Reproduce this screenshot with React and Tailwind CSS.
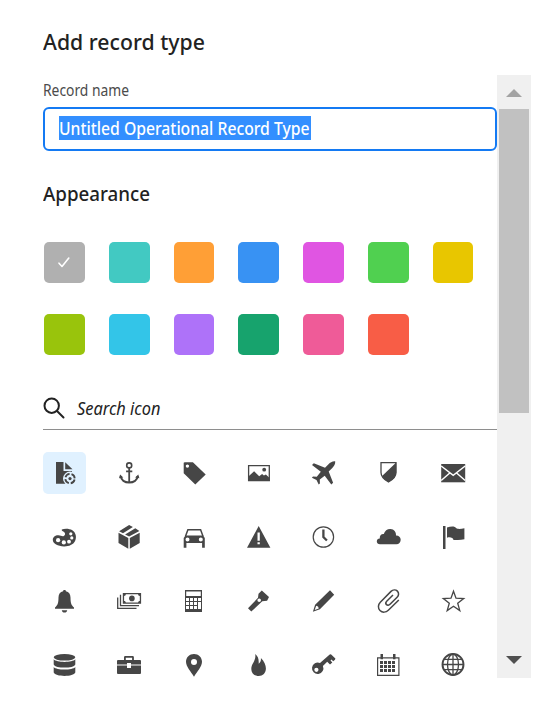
import React from "react";

const swatches = [
  "bg-[#b0b0b0]", "bg-[#42c9c2]", "bg-[#ff9f36]", "bg-[#3892f3]", "bg-[#e055e2]", "bg-[#50d050]", "bg-[#e8c600]",
  "bg-[#99c40c]", "bg-[#33c5e8]", "bg-[#ae72f9]", "bg-[#17a36d]", "bg-[#ef5b98]", "bg-[#f85d46]",
];

const line = { fill: "none", stroke: "currentColor" };

const icons = [
  <g>
    <path d="M3.500 1h7.500v9H19.500V22.800H3.500z" />
    <path d="M12.700 1.200v7h7.300z" />
    <circle cx="17.500" cy="17.600" r="7" fill="#e0f1ff" />
    <circle cx="17.500" cy="17.600" r="4.700" {...line} strokeWidth="1.800" strokeDasharray="5.400 1.980" strokeDashoffset="-1" />
    <circle cx="17.500" cy="17.600" r="1.600" />
  </g>,
  <g>
    <circle cx="11.700" cy="4.400" r="2.500" {...line} strokeWidth="1.600" />
    <path d="M11.700 7v15M8.600 10.400h6.200" {...line} strokeWidth="1.800" />
    <path d="M3.200 15.200c.4 4 4 6.300 8.500 6.300s8.100-2.300 8.500-6.300" {...line} strokeWidth="2" />
    <path d="M1.500 17.200 2.600 13.500 5.800 16.600zM21.900 17.200 20.800 13.500 17.600 16.600z" />
  </g>,
  <path fillRule="evenodd" d="M2.200 1.200h8.200L23.200 13.400 12.800 23.600 1.200 12.200V1.800zM4.900 3.400a1.700 1.700 0 1 0 0 3.400 1.700 1.700 0 0 0 0-3.400z" />,
  <g>
    <path d="M2.100 4.700h20.700v14.800H2.100z" {...line} strokeWidth="1.300" />
    <path d="M1.900 15.500 7.600 10.200 12.700 15.200 15.600 13 17.400 14.500 19.400 13.600 23.100 17v3H1.900z" />
    <circle cx="17.700" cy="8.700" r="1.900" />
  </g>,
  <path d="M23.700.3C21 0 18.700 1.500 17 3.200L13.500 6.800 2.300 2.200.5 4l8.800 6.800-4 5-3.800-.2L.4 16.800 5 19l2.200 4.600 1.200-1.200-.1-3.800 4.900-3.900 6.600 8.900 1.800-1.800-4.400-11.300L20.800 7c1.700-1.700 3.200-4 2.900-6.700z" />,
  <g>
    <path d="M4.500 1.700h15v9.800c0 4.500-3.500 7.300-7.500 9.500-4-2.200-7.500-5-7.500-9.500z" {...line} strokeWidth="1.300" />
    <path d="M19.700 1.500v10c0 4.500-3.700 7.400-7.700 9.600-3-1.600-5.300-3.600-6.400-6.100z" />
  </g>,
  <g>
    <path d="M-.3 3h24v18.300h-24z" />
    <path d="M-.3 5 11.700 14.300 23.700 5M-.3 19.500l8.600-7.500M23.700 19.500l-8.600-7.500" fill="none" stroke="#fff" strokeWidth="1.500" />
  </g>,

  <g>
    <path d="M9.300 4.600C12 3.300 17 3.500 19.800 5.300c3.600 2.300 4.600 7 2.800 10.700-1.900 3.800-6.300 5.500-11.100 5.400C5.400 21.300.3 18.800.3 14.800.3 11.800 3 10 6 10.200c2.300.1 3.600 1.500 5.300.8 1.900-.8 1.500-3 .3-3.900C10.600 6.400 8.800 6 9.300 4.600z" />
    <g fill="#fff">
      <circle cx="5.600" cy="15.200" r="2.100" /><circle cx="11.300" cy="17.400" r="2.100" /><circle cx="16.500" cy="16.700" r="1.900" /><circle cx="19.300" cy="12.900" r="1.600" /><circle cx="18.300" cy="8.800" r="1.600" />
    </g>
  </g>,
  <g>
    <path d="M1 7.800 10.800 13v10.700L1 18zM12.300 13l9.900-5.200V18l-9.900 5.700z" />
    <path d="M1.600 6.200 11.600 0l3.800 2.100L5.500 8.300zM7.600 9.400l10.200-6.100 4.100 2.600-10.300 5.600z" />
  </g>,
  <g>
    <path d="M2.900 11.500 5.400 4.800h12.700l2.500 6.700" {...line} strokeWidth="1.500" />
    <path fillRule="evenodd" d="M3 10.500h17.500l1.800 2.500v9.700h-2.700V18H3.900v4.700H1.200V13zM5 12.600a2 2 0 1 0 0 4 2 2 0 0 0 0-4zM18.300 12.600a2 2 0 1 0 0 4 2 2 0 0 0 0-4z" />
  </g>,
  <path fillRule="evenodd" d="M12.200 1 .5 22.700h23.400zM11 7.500h2.300v8.200H11zM11 17.200h2.300v2.100H11z" />,
  <g {...line}>
    <circle cx="11.900" cy="12" r="10.200" strokeWidth="1.200" />
    <path d="M11.900 4.500V12l3.500 3.500" strokeWidth="2.300" />
  </g>,
  <path d="M3.500 19.300C1.500 19.300.3 18 .3 16.500c0-1.800 1.300-3.100 3-3-.4-2.700 1.500-4.800 4-4.500C8.200 5.800 11 3.800 14 4c3.500.2 5.800 3 5.500 6.500 2.500-.2 4.700 1.700 4.700 4.300 0 2.500-1.900 4.500-4.200 4.500z" />,
  <path d="M1.500 1H4v23H1.500zM5.500 2.500c2.300-.8 4.500-1.200 6.500-1 2.200.2 2 2 4 2.300 2.300.4 4.500-.2 6.900-.5v11c-3 .8-5.800.9-9.300.7H12c-.4-2.400-3.500-3.300-6.500-2.300z" />,

  <path d="M10.600 2.200c0-.8.500-1.300 1.400-1.300s1.400.5 1.400 1.300C16.300 2.800 18 5 18 8.500c0 6 1 7.800 3.500 10v1.300h-19v-1.300C5 16.300 6 14.500 6 8.500c0-3.500 1.700-5.700 4.600-6.300zM9.300 21.200h5.400C14.500 22.800 13.500 23.600 12 23.600S9.500 22.800 9.300 21.200z" />,
  <g>
    <path d="M3 5.700v11h18.500M.2 8.500v10.900H19" {...line} strokeWidth="1.300" />
    <path fillRule="evenodd" d="M5.300 4h18.300v10.800H5.300zM8.300 5.200c0 1-.7 1.700-1.700 1.700v5c1 0 1.700.7 1.700 1.700h12.300c0-1 .7-1.700 1.700-1.700v-5c-1 0-1.700-.7-1.700-1.700z" />
    <circle cx="14.400" cy="9.400" r="2.800" />
  </g>,
  <path fillRule="evenodd" d="M2.500 1h17v22h-17zM3.700 2.400v4.600h14.600V2.400zM3.500 9h3v3h-3zM7.500 9h3v3h-3zM11.500 9h3v3h-3zM15.500 9h3v3h-3zM3.500 13h3v3h-3zM7.500 13h3v3h-3zM11.500 13h3v3h-3zM15.500 13h3v7h-3zM3.500 17h3v3h-3zM7.500 17h3v3h-3zM11.500 17h3v3h-3z" />,
  <path fillRule="evenodd" d="M15.300 1.500 22.500 8.100 20.600 11.800 15.800 12.300 4.800 22.500 1.500 19.200 11.500 8.800 12 4.800zM12.700 9.500a1.800 1.800 0 1 0 0 3.600 1.800 1.800 0 0 0 0-3.600z" />,
  <path fillRule="evenodd" d="M18.500 1.300 22.700 5.700 8.400 20.300 1.400 22.800 3.600 15.800zM4.700 16.800 3.200 20.900 7.300 19.400 6.500 17.500z" />,
  <path d="M22.300 11 11.800 21.300C9.500 23.600 5.800 23.800 3.500 21.500 1.200 19.200 1.500 15.500 3.800 13.200L14.500 2.400C16.400.6 19.200.4 20.900 2.100c1.700 1.700 1.500 4.400-.3 6.200l-7.100 7c-1.100 1.100-2.600 1.200-3.500.3-.9-.9-.8-2.400.2-3.400L16.500 6" {...line} strokeWidth="1.500" />,
  <path d="M12 2.200 14.500 9.200 22.200 9.500 16.200 14.200 18.300 21.600 12 17.300 5.700 21.600 7.800 14.200 1.800 9.500 9.500 9.200z" {...line} strokeWidth="1.300" />,

  <g>
    <ellipse cx="12" cy="4.300" rx="10.800" ry="3.300" />
    <path d="M1.200 6.300c1.500 1.800 6 2.600 10.800 2.600s9.300-.8 10.800-2.600v5.100c-1 2.200-5.500 3.200-10.800 3.200s-9.800-1-10.800-3.200zM1.200 13.900c1.500 1.800 6 2.600 10.800 2.600s9.300-.8 10.800-2.600v5.600c-1 2.300-5.500 3.400-10.800 3.400s-9.800-1.100-10.800-3.400z" />
  </g>,
  <path fillRule="evenodd" d="M6.500 7V4.300Q6.500 3 7.800 3h7.300q1.300 0 1.300 1.300V7h6.100q1 0 1 1v3.500h-10V10h-4v1.500h-10V8q0-1 1-1zM8.300 7h6.300V4.700H8.300zM-.5 12.600h10v2.300h4v-2.300h10V20q0 1-1 1h-22q-1 0-1-1z" />,
  <path fillRule="evenodd" d="M11.500 1c4.500 0 8 3.400 8 7.700 0 4.800-5 10-8 15-3-5-8-10.200-8-15C3.500 4.400 7 1 11.500 1zM11.500 6.100a3 3 0 1 0 0 6 3 3 0 0 0 0-6z" />,
  <path d="M8.700 1c3 2.300 3.700 5.300 3.500 9.700 1.700-1 2.500-3 2.200-5.700 3.300 3.300 5 7 5 10.600 0 4.500-3 7.500-7.200 7.500-4.300 0-7.400-3-7.400-7.200C4.800 10.500 9.900 7.800 8.700 1z" />,
  <path fillRule="evenodd" d="M19.400 1.200 23.900 5.500l-.4 1.200-1.800 1.600-1.700-1.700-1 1 1.800 1.800-2.300 2.200-2.800-2.800-4.300 4.200a5.700 5.700 0 1 1-2.900-2.900L18.200 1.400zM4.900 14.700a2.100 2.100 0 1 0 0 4.200 2.100 2.100 0 0 0 0-4.200z" />,
  <g>
    <path d="M1.100 4.800h21.300v17.600H1.100z" {...line} strokeWidth="1.200" />
    <path d="M4 1h2.500v5.300H4zM16.500 1H19v5.300h-2.500z" />
    <path d="M3.500 9.500h15.100M3.500 13.500h15.100M3.500 17.500h15.100" {...line} strokeWidth="2.800" strokeDasharray="3 1" />
  </g>,
  <g {...line} strokeWidth="1.300">
    <circle cx="11.500" cy="11.500" r="10.500" strokeWidth="1.900" />
    <ellipse cx="11.500" cy="11.500" rx="5.500" ry="10.500" />
    <path d="M11.500 1v21M1 11.500h21M2.500 6.300h18M2.500 16.700h18" />
  </g>,
];

export default function App() {
  return (
    <main className="h-[709px] w-[556px] overflow-hidden bg-white pl-[43px] pt-[26px] font-['Noto_Sans',sans-serif] text-[#222]">
      <h1 className="h-[49px] origin-left scale-x-[.965] text-[22px] leading-[30px] font-medium whitespace-nowrap">Add record type</h1>
      <div className="flex h-[603px] w-[488px]">
        <section className="w-[454px] shrink-0">
          <label className="block h-8 origin-left scale-x-[.865] pt-[5px] text-[16px] leading-[21px] whitespace-nowrap text-[#4b4b4b]">Record name</label>
          <div className="flex h-[44px] rounded-[6px] border-2 border-[#147af3] pl-[14px] pt-[7px]">
            <span className="h-6 w-[252px] bg-[#338fff] text-white">
              <span className="inline-block origin-left scale-x-[.874] text-[18px] leading-6 font-medium whitespace-nowrap">Untitled Operational Record Type</span>
            </span>
          </div>
          <h2 className="mt-[29px] h-7 origin-left scale-x-[.938] text-[20px] leading-7 font-medium whitespace-nowrap">Appearance</h2>
          <div className="mt-[34px] ml-px grid grid-cols-[repeat(7,40.75px)] gap-x-[24px] gap-y-[31px]">
            {swatches.map((color, i) => (
              <div key={color} className={"flex h-[41px] items-center justify-center rounded-[5px] " + color}>
                {i === 0 && (
                  <svg width="14" height="14" viewBox="0 0 14 14" fill="none" stroke="#fff" strokeWidth="1.600" strokeLinecap="round" strokeLinejoin="round">
                    <path d="M2 7.200 5 10.500 11.800 2" />
                  </svg>
                )}
              </div>
            ))}
          </div>
          <div className="mt-[31px] flex h-[44px] items-center border-b border-[#8e8e8e]">
            <svg width="22" height="22" viewBox="0 0 22 22" fill="none" stroke="#222" strokeWidth="2" strokeLinecap="round">
              <circle cx="8.700" cy="8.700" r="7.200" /><path d="m14 14 6.500 6.500" />
            </svg>
            <span className="ml-3 origin-left scale-x-[.91] text-[18px] leading-6 whitespace-nowrap italic">Search icon</span>
          </div>
          <div className="mt-[22px] grid grid-cols-[repeat(7,43px)] gap-x-[21.8px] gap-y-[22px]">
            {icons.map((icon, i) => (
              <div key={i} className={"flex h-[42px] items-center justify-center rounded-[5px] text-[#464646] " + (i === 0 ? "bg-[#e0f1ff]" : "")}>
                <svg width="25" height="24" viewBox="-0.5 0 25 24" fill="currentColor" className="shrink-0 overflow-visible">{icon}</svg>
              </div>
            ))}
          </div>
        </section>
        <aside className="flex w-[34px] shrink-0 flex-col items-center justify-between bg-[#f0f0f0]">
          <div className="flex flex-col items-center">
            <div className="flex h-[34px] items-center pt-[2px]">
              <svg width="16" height="8" viewBox="0 0 16 8" fill="#a3a3a3"><path d="M0 8 8 0l8 8z" /></svg>
            </div>
            <div className="h-[304px] w-[30px] bg-[#c1c1c1]" />
          </div>
          <svg width="16" height="8" viewBox="0 0 16 8" fill="#505050" className="mb-[14px]"><path d="M0 0h16L8 8z" /></svg>
        </aside>
      </div>
    </main>
  );
}
